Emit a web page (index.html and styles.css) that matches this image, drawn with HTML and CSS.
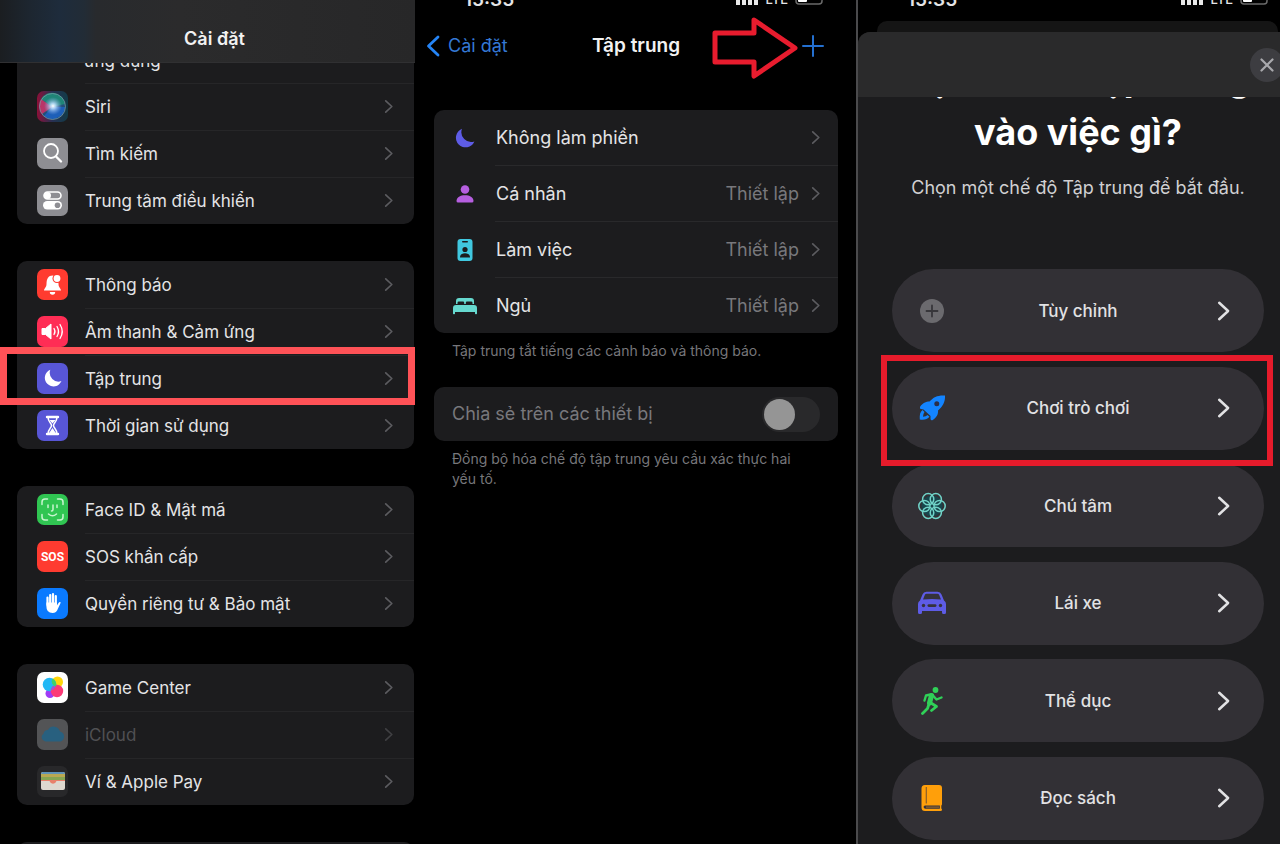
FILE: index.html
```html
<!DOCTYPE html>
<html lang="vi">
<head>
    <meta charset="UTF-8">
    <meta name="viewport" content="width=device-width, initial-scale=1.0">
    <title>Cài đặt - Tập trung</title>
    <link rel="stylesheet" href="styles.css">
</head>
<body>
    <svg class="sprite" aria-hidden="true">
        <symbol id="chevron" viewBox="0 0 10 16">
            <path d="M1.5 2 L8 8 L1.5 14" fill="none" stroke="currentColor" stroke-width="1.800" stroke-linecap="round" stroke-linejoin="round"/>
        </symbol>
        <symbol id="moon" viewBox="0 0 20 20">
            <path d="M7 .8 A9.6 9.6 0 1 0 19.4 13.4 A9.8 9.8 0 0 1 7 .8 Z" fill="currentColor"/>
        </symbol>
    </svg>

    <main class="screens">
        <!-- Settings list -->
        <section class="screen settings">
            <header class="settings-header">
                <h2>Cài đặt</h2>
            </header>

            <ul class="card card-cut">
                <li class="row row-cut"><span>ứng dụng</span></li>
                <li>
                    <a class="row" href="#siri">
                        <svg class="app-icon" viewBox="0 0 31 31">
                            <defs>
                                <radialGradient id="siriCore">
                                    <stop offset="0" stop-color="#fff"/>
                                    <stop offset=".3" stop-color="#bfe0ff" stop-opacity=".85"/>
                                    <stop offset="1" stop-color="#7aa0e0" stop-opacity="0"/>
                                </radialGradient>
                                <linearGradient id="siriBg">
                                    <stop offset="0" stop-color="#8c1038"/>
                                    <stop offset=".5" stop-color="#263052"/>
                                    <stop offset="1" stop-color="#123c48"/>
                                </linearGradient>
                            </defs>
                            <rect width="31" height="31" rx="7" fill="url(#siriBg)"/>
                            <circle cx="15.500" cy="15.500" r="13" fill="#235078"/>
                            <path d="M15 16 L4 8 A13 13 0 0 1 28 13 Z" fill="#1f8577"/>
                            <path d="M15 16 L4 8 A13 13 0 0 0 5 23 Z" fill="#b83668"/>
                            <path d="M15 16 L28 16 A13 13 0 0 1 7 25 Z" fill="#1d5fb8"/>
                            <circle cx="16" cy="15" r="9" fill="url(#siriCore)"/>
                            <circle cx="15.500" cy="15.500" r="13" fill="none" stroke="#7c9ea8" stroke-opacity=".7"/>
                        </svg>
                        <span class="label">Siri</span>
                        <svg class="chevron"><use href="#chevron"/></svg>
                    </a>
                </li>
                <li>
                    <a class="row" href="#search">
                        <svg class="app-icon" viewBox="0 0 31 31">
                            <rect width="31" height="31" rx="7" fill="#8e8e93"/>
                            <circle cx="14" cy="13" r="7" fill="none" stroke="#fff" stroke-width="1.800"/>
                            <path d="M19 18.500 L24 23.500" stroke="#fff" stroke-width="2.400" stroke-linecap="round"/>
                        </svg>
                        <span class="label">Tìm kiếm</span>
                        <svg class="chevron"><use href="#chevron"/></svg>
                    </a>
                </li>
                <li>
                    <a class="row" href="#control-center">
                        <svg class="app-icon" viewBox="0 0 31 31">
                            <rect width="31" height="31" rx="7" fill="#8e8e93"/>
                            <rect x="7" y="7" width="17" height="7" rx="3.500" fill="none" stroke="#fff" stroke-width="1.600"/>
                            <circle cx="10.500" cy="10.500" r="3.500" fill="#fff"/>
                            <rect x="6" y="16" width="19" height="8.500" rx="4.200" fill="#fff"/>
                            <circle cx="20.500" cy="20.200" r="2.800" fill="#8e8e93"/>
                        </svg>
                        <span class="label">Trung tâm điều khiển</span>
                        <svg class="chevron"><use href="#chevron"/></svg>
                    </a>
                </li>
            </ul>

            <ul class="card">
                <li>
                    <a class="row" href="#notifications">
                        <svg class="app-icon" viewBox="0 0 31 31">
                            <rect width="31" height="31" rx="7" fill="#ff3b30"/>
                            <path d="M7 21.500 C7 19.500 9.500 18.500 9.500 15 C9.500 9.500 11.500 6.500 15.500 6.500 C19.500 6.500 21.500 9.500 21.500 15 C21.500 18.500 24 19.500 24 21.500 Z" fill="#fff"/>
                            <path d="M12.800 23 H18.200 A2.700 2.700 0 0 1 12.800 23 Z" fill="#fff"/>
                            <circle cx="20" cy="9.500" r="4.500" fill="#ff3b30"/>
                            <circle cx="20" cy="9.500" r="3.400" fill="#fff"/>
                        </svg>
                        <span class="label">Thông báo</span>
                        <svg class="chevron"><use href="#chevron"/></svg>
                    </a>
                </li>
                <li>
                    <a class="row" href="#sounds">
                        <svg class="app-icon" viewBox="0 0 31 31">
                            <rect width="31" height="31" rx="7" fill="#ff2d55"/>
                            <path d="M5 12.500 H8.500 L14 8 V23 L8.500 18.500 H5 Z" fill="#fff" stroke="#fff" stroke-linejoin="round"/>
                            <path d="M17 12.500 Q19 15.500 17 18.500 M20 10.500 Q23 15.500 20 20.500 M23 8.500 Q27.500 15.500 23 22.500" fill="none" stroke="#fff" stroke-width="1.300" stroke-linecap="round"/>
                        </svg>
                        <span class="label">Âm thanh &amp; Cảm ứng</span>
                        <svg class="chevron"><use href="#chevron"/></svg>
                    </a>
                </li>
                <li class="marked">
                    <a class="row" href="#focus">
                        <svg class="app-icon" viewBox="0 0 31 31">
                            <rect width="31" height="31" rx="7" fill="#5856d6"/>
                            <use href="#moon" x="7" y="6" width="18" height="18" color="#fff"/>
                        </svg>
                        <span class="label">Tập trung</span>
                        <svg class="chevron"><use href="#chevron"/></svg>
                    </a>
                </li>
                <li>
                    <a class="row" href="#screen-time">
                        <svg class="app-icon" viewBox="0 0 31 31">
                            <rect width="31" height="31" rx="7" fill="#5856d6"/>
                            <path d="M10 7 H21 M10 24 H21" stroke="#fff" stroke-width="2.400" stroke-linecap="round"/>
                            <path d="M11 7 C11 12 14.500 13 14.500 15.500 C14.500 18 11 19 11 24 H20 C20 19 16.500 18 16.500 15.500 C16.500 13 20 12 20 7" fill="none" stroke="#fff" stroke-width="1.500"/>
                            <path d="M12.500 10 H18.500 L15.500 13.500 Z M15.500 18 L18.800 23 H12.200 Z" fill="#fff"/>
                        </svg>
                        <span class="label">Thời gian sử dụng</span>
                        <svg class="chevron"><use href="#chevron"/></svg>
                    </a>
                </li>
            </ul>

            <ul class="card">
                <li>
                    <a class="row" href="#face-id">
                        <svg class="app-icon" viewBox="0 0 31 31">
                            <rect width="31" height="31" rx="7" fill="#30c552"/>
                            <g fill="none" stroke="#c8f5d0" stroke-width="1.500" stroke-linecap="round">
                                <path d="M5 10.500 V8 A3 3 0 0 1 8 5 H10.500 M20.500 5 H23 A3 3 0 0 1 26 8 V10.500 M26 20.500 V23 A3 3 0 0 1 23 26 H20.500 M10.500 26 H8 A3 3 0 0 1 5 23 V20.500"/>
                                <path d="M11 11 V13.500 M20 11 V13.500 M16 11 V15.500 Q16 17 14.500 17 M11.500 20 Q15.500 23.500 19.500 20"/>
                            </g>
                        </svg>
                        <span class="label">Face ID &amp; Mật mã</span>
                        <svg class="chevron"><use href="#chevron"/></svg>
                    </a>
                </li>
                <li>
                    <a class="row" href="#sos">
                        <span class="app-icon sos-icon">SOS</span>
                        <span class="label">SOS khẩn cấp</span>
                        <svg class="chevron"><use href="#chevron"/></svg>
                    </a>
                </li>
                <li>
                    <a class="row" href="#privacy">
                        <svg class="app-icon" viewBox="0 0 31 31">
                            <rect width="31" height="31" rx="7" fill="#0a7aff"/>
                            <path d="M10.500 9.500 V17 M13.200 7 V16 M16 6.200 V16 M18.800 8 V17" stroke="#fff" stroke-width="2.200" stroke-linecap="round"/>
                            <path d="M9.400 14.500 H19.900 V17.500 L21.500 15 Q22.800 13.300 23.800 14.600 L21 20.500 Q19.500 25 15.500 25 Q9.400 25 9.400 18.500 Z" fill="#fff"/>
                        </svg>
                        <span class="label">Quyền riêng tư &amp; Bảo mật</span>
                        <svg class="chevron"><use href="#chevron"/></svg>
                    </a>
                </li>
            </ul>

            <ul class="card">
                <li>
                    <a class="row" href="#game-center">
                        <svg class="app-icon" viewBox="0 0 31 31">
                            <rect width="31" height="31" rx="7" fill="#fff"/>
                            <circle cx="20.500" cy="10" r="5.500" fill="#ffd60a"/>
                            <circle cx="13" cy="21.500" r="4.500" fill="#a03cf5"/>
                            <circle cx="12.500" cy="12.500" r="6.800" fill="#22b8f5"/>
                            <circle cx="20" cy="19" r="6.200" fill="#fb3a76"/>
                            <path d="M15.500 6.500 A5.500 5.500 0 0 0 19 14.800 A6.800 6.800 0 0 0 15.500 6.500 Z" fill="#3fd26a"/>
                            <path d="M14 18.500 A6 6 0 0 1 18.500 13.600 A6.500 6.500 0 0 1 14 18.500 Z" fill="#8a5be8"/>
                        </svg>
                        <span class="label">Game Center</span>
                        <svg class="chevron"><use href="#chevron"/></svg>
                    </a>
                </li>
                <li>
                    <a class="row disabled" href="#icloud">
                        <svg class="app-icon" viewBox="0 0 31 31">
                            <rect width="31" height="31" rx="7" fill="#535456"/>
                            <path d="M8.500 22.500 A4.300 4.300 0 0 1 6.500 14.700 A4.500 4.500 0 0 1 11 11 A6.500 6.500 0 0 1 23 12.500 A5.200 5.200 0 0 1 23.500 22.500 Z" fill="#28607f"/>
                        </svg>
                        <span class="label">iCloud</span>
                        <svg class="chevron"><use href="#chevron"/></svg>
                    </a>
                </li>
                <li>
                    <a class="row" href="#wallet">
                        <svg class="app-icon" viewBox="0 0 31 31">
                            <rect width="31" height="31" rx="7" fill="#28282a"/>
                            <rect x="4" y="6" width="24" height="18" rx="2" fill="#ddd8cf"/>
                            <path d="M4 8 A2 2 0 0 1 6 6 H26 A2 2 0 0 1 28 8 Z" fill="#5f93b8"/>
                            <path d="M4 8 H28 V11 H4 Z" fill="#b9a852"/>
                            <path d="M4 11 H28 V14 H4 Z" fill="#86a552"/>
                            <path d="M4 14 H28 V15 H19.500 Q18.500 17.800 16 17.800 Q13.500 17.800 12.500 15 H4 Z" fill="#e8806a"/>
                        </svg>
                        <span class="label">Ví &amp; Apple Pay</span>
                        <svg class="chevron"><use href="#chevron"/></svg>
                    </a>
                </li>
            </ul>

            <ul class="card">
                <li class="row"></li>
            </ul>
        </section>

        <!-- Focus list -->
        <section class="screen focus">
            <div class="status-bar">
                <span>15:35</span>
                <div class="status-right">
                    <svg class="signal" viewBox="0 0 23 12"><path d="M2 6 V12 M8 4 V12 M14 2 V12 M20 0 V12" stroke="#e8e8e8" stroke-width="4"/></svg>
                    <span class="carrier">LTE</span>
                    <svg class="battery" viewBox="0 0 28 13"><rect x="1" y="1" width="26" height="11" rx="3" fill="none" stroke="#6a6a6a" stroke-width="1.500"/><rect x="3" y="3" width="9" height="7" rx="1" fill="#fff"/></svg>
                </div>
            </div>

            <nav class="focus-nav">
                <a class="back" href="#settings">
                    <svg viewBox="0 0 14 22"><path d="M12 2 L2.500 11 L12 20" fill="none" stroke="currentColor" stroke-width="2.800" stroke-linecap="round" stroke-linejoin="round"/></svg>
                    Cài đặt
                </a>
                <h2>Tập trung</h2>
                <button class="add" type="button" aria-label="Thêm">
                    <svg viewBox="0 0 22 22"><path d="M11 1 V21 M1 11 H21" stroke="currentColor" stroke-width="2" stroke-linecap="round"/></svg>
                </button>
                <svg class="arrow" viewBox="0 0 88 64"><path d="M4 17 H43 V4 L84 32 L43 60 V46 H4 Z" fill="none" stroke="#e81c2e" stroke-width="5" stroke-linejoin="round"/></svg>
            </nav>

            <ul class="card">
                <li>
                    <a class="row" href="#dnd">
                        <svg class="mode-icon indigo" viewBox="0 0 26 26"><use href="#moon" x="3" y="3" width="20" height="20"/></svg>
                        <span class="label">Không làm phiền</span>
                        <svg class="chevron"><use href="#chevron"/></svg>
                    </a>
                </li>
                <li>
                    <a class="row" href="#personal">
                        <svg class="mode-icon purple" viewBox="0 0 26 26" fill="currentColor">
                            <circle cx="13" cy="8.500" r="4.300"/>
                            <path d="M4.500 20 C4.500 16 8.500 14.200 13 14.200 C17.500 14.200 21.500 16 21.500 20 Q21.500 21.500 20 21.500 H6 Q4.500 21.500 4.500 20 Z"/>
                        </svg>
                        <span class="label">Cá nhân</span>
                        <span class="value">Thiết lập</span>
                        <svg class="chevron"><use href="#chevron"/></svg>
                    </a>
                </li>
                <li>
                    <a class="row" href="#work">
                        <svg class="mode-icon cyan" viewBox="0 0 26 26">
                            <rect x="5.500" y="2" width="15" height="22" rx="3" fill="currentColor"/>
                            <rect x="10" y="4" width="6" height="1.600" rx=".8" fill="#1c1c1e"/>
                            <circle cx="13" cy="12.500" r="2.600" fill="#1c1c1e"/>
                            <path d="M8 20.500 C8 17.500 10 16.200 13 16.200 C16 16.200 18 17.500 18 20.500 Z" fill="#1c1c1e"/>
                        </svg>
                        <span class="label">Làm việc</span>
                        <span class="value">Thiết lập</span>
                        <svg class="chevron"><use href="#chevron"/></svg>
                    </a>
                </li>
                <li>
                    <a class="row" href="#sleep">
                        <svg class="mode-icon mint" viewBox="0 0 26 26" fill="currentColor">
                            <path d="M4 11 V8 A3 3 0 0 1 7 5 H19 A3 3 0 0 1 22 8 V11 H20.500 V9.800 Q20.500 8.500 19.200 8.500 H15 Q13.800 8.500 13.800 9.800 V11 H12.200 V9.800 Q12.200 8.500 11 8.500 H6.800 Q5.500 8.500 5.500 9.800 V11 Z"/>
                            <path d="M1 20.500 V15 Q1 12 4 12 H22 Q25 12 25 15 V20.500 Q25 21.300 24.200 21.300 H23.800 Q23 21.300 23 20.500 V19 H3 V20.500 Q3 21.300 2.200 21.300 H1.800 Q1 21.300 1 20.500 Z"/>
                        </svg>
                        <span class="label">Ngủ</span>
                        <span class="value">Thiết lập</span>
                        <svg class="chevron"><use href="#chevron"/></svg>
                    </a>
                </li>
            </ul>
            <p class="note">Tập trung tắt tiếng các cảnh báo và thông báo.</p>

            <div class="card share">
                <label for="share">Chia sẻ trên các thiết bị</label>
                <input class="switch" type="checkbox" id="share" disabled>
            </div>
            <p class="note">Đồng bộ hóa chế độ tập trung yêu cầu xác thực hai yếu tố.</p>
        </section>

        <!-- New focus sheet -->
        <section class="screen picker">
            <div class="status-bar">
                <span>15:35</span>
                <div class="status-right">
                    <svg class="signal" viewBox="0 0 23 12"><path d="M2 6 V12 M8 4 V12 M14 2 V12 M20 0 V12" stroke="#e8e8e8" stroke-width="4"/></svg>
                    <span class="carrier">LTE</span>
                    <svg class="battery" viewBox="0 0 28 13"><rect x="1" y="1" width="26" height="11" rx="3" fill="none" stroke="#6a6a6a" stroke-width="1.500"/><rect x="3" y="3" width="9" height="7" rx="1" fill="#fff"/></svg>
                </div>
            </div>
            <div class="sheet-behind"></div>
            <div class="sheet">
                <header class="sheet-header">
                    <button class="close" type="button" aria-label="Đóng">
                        <svg viewBox="0 0 14 14"><path d="M1.500 1.500 L12.500 12.500 M12.500 1.500 L1.500 12.500" stroke="currentColor" stroke-width="2.200" stroke-linecap="round"/></svg>
                    </button>
                </header>
                <div class="sheet-title">
                    <h1>Bạn muốn tập trung<br>vào việc gì?</h1>
                </div>
                <p class="sheet-text">Chọn một chế độ Tập trung để bắt đầu.</p>

                <div class="options">
                    <button class="option" type="button">
                        <svg class="option-icon" viewBox="0 0 28 28">
                            <circle cx="14" cy="14" r="12" fill="#6b6a6e"/>
                            <path d="M14 8.500 V19.500 M8.500 14 H19.500" stroke="#37363a" stroke-width="1.800" stroke-linecap="round"/>
                        </svg>
                        <span>Tùy chỉnh</span>
                        <svg class="option-chevron"><use href="#chevron"/></svg>
                    </button>
                    <button class="option selected" type="button">
                        <svg class="option-icon" viewBox="0 0 28 28">
                            <path d="M27 1.500 C20 1 15.500 3 11.500 7.500 C8 7.500 4.500 9 2 13 Q1.500 14.800 3 15 L5.500 15.500 L12.500 22 L12.500 25 Q13 27 14.800 26 C18.500 23.500 20.500 20 20 16.500 C24.500 12.500 27.500 8 27 1.500 Z" fill="#1384ff"/>
                            <circle cx="18.800" cy="9.700" r="2.500" fill="#2b2f4a"/>
                            <path d="M4.500 16 C2 18 1.500 21 1.800 25.500 C6 26 9.500 25.500 11.500 22.800 L9.500 21 Q8 22.800 5 22.800 Q5 20 6.500 18 Z" fill="#1384ff"/>
                        </svg>
                        <span>Chơi trò chơi</span>
                        <svg class="option-chevron"><use href="#chevron"/></svg>
                    </button>
                    <button class="option" type="button">
                        <svg class="option-icon" viewBox="0 0 28 28">
                            <circle cx="14" cy="14" r="10.500" fill="#17454c"/>
                            <g fill="none" stroke="#70d3c8" stroke-width="1.500">
                                <circle cx="6.400" cy="14" r="5.600"/>
                                <circle cx="21.600" cy="14" r="5.600"/>
                                <circle cx="10.200" cy="7.200" r="5.600"/>
                                <circle cx="17.800" cy="7.200" r="5.600"/>
                                <circle cx="10.200" cy="20.800" r="5.600"/>
                                <circle cx="17.800" cy="20.800" r="5.600"/>
                            </g>
                        </svg>
                        <span>Chú tâm</span>
                        <svg class="option-chevron"><use href="#chevron"/></svg>
                    </button>
                    <button class="option" type="button">
                        <svg class="option-icon" viewBox="0 0 28 28">
                            <path d="M0 23.500 V15 Q0 12.500 2 11.500 L4.500 5.500 Q5.500 2.800 8.500 2.800 H19.500 Q22.500 2.800 23.500 5.500 L26 11.500 Q28 12.500 28 15 V23.500 Q28 25 26.500 25 H25.500 Q24 25 24 23.500 V22 H4 V23.500 Q4 25 2.500 25 H1.500 Q0 25 0 23.500 Z" fill="#5e5ce6"/>
                            <path d="M5 10.500 L6.800 6 Q7.300 4.800 8.600 4.800 H19.400 Q20.700 4.800 21.200 6 L23 10.500 Q14 9.700 5 10.500 Z" fill="#35323c"/>
                            <circle cx="5.500" cy="16.500" r="1.700" fill="#35323c"/>
                            <circle cx="22.500" cy="16.500" r="1.700" fill="#35323c"/>
                            <rect x="9.500" y="15.300" width="9" height="2.600" rx="1.300" fill="#35323c"/>
                        </svg>
                        <span>Lái xe</span>
                        <svg class="option-chevron"><use href="#chevron"/></svg>
                    </button>
                    <button class="option" type="button">
                        <svg class="option-icon" viewBox="0 0 28 28">
                            <circle cx="17.500" cy="3" r="2.900" fill="#30d158"/>
                            <g fill="none" stroke="#30d158" stroke-linecap="round" stroke-linejoin="round">
                                <path d="M13.500 8.500 L11.500 16" stroke-width="5"/>
                                <path d="M14.500 8 L18.500 12.500 L23.500 10.500" stroke-width="2.400"/>
                                <path d="M12.500 7.500 L8 8.500 L6.500 13.500" stroke-width="2.400"/>
                                <path d="M13 16 L18.500 19.500 L13.500 23.500" stroke-width="2.800"/>
                                <path d="M11 17 L9.500 21.500 L4.500 26.500" stroke-width="2.800"/>
                            </g>
                        </svg>
                        <span>Thể dục</span>
                        <svg class="option-chevron"><use href="#chevron"/></svg>
                    </button>
                    <button class="option" type="button">
                        <svg class="option-icon" viewBox="0 0 28 28">
                            <path d="M7 1 H21 Q24 1 24 4 V20 Q24 21 23.300 21.500 V24.500 Q24 24.800 24 25.700 Q24 27 22.500 27 H7 Q3.500 27 3.500 23.500 V4.500 Q3.500 1 7 1 Z" fill="#ff9f0a"/>
                            <path d="M8.300 3 V19.500" stroke="#8a5f2a" stroke-width="1.200"/>
                            <path d="M7 21.500 H21.800 V24.700 H7 Q5.600 24.500 5.600 23.100 Q5.600 21.700 7 21.500 Z" fill="#35323c"/>
                            <path d="M8 23.100 H21" stroke="#c98424" stroke-width=".8"/>
                        </svg>
                        <span>Đọc sách</span>
                        <svg class="option-chevron"><use href="#chevron"/></svg>
                    </button>
                </div>
            </div>
        </section>
    </main>
</body>
</html>
```

FILE: styles.css
```css
* {
    margin: 0;
    padding: 0;
    box-sizing: border-box;
}

body {
    background: #000;
    color: #e4e4e6;
    font-family: Inter, Roboto, sans-serif;
    font-size: 17px;
    line-height: 24px;
}

a {
    color: inherit;
    text-decoration: none;
}

ul {
    list-style: none;
}

button {
    border: none;
    background: none;
    color: inherit;
    font: inherit;
    cursor: pointer;
}

svg {
    display: block;
    flex-shrink: 0;
}

h2 {
    font-size: 18px;
    font-weight: 600;
    color: #f2f2f2;
}

.sprite {
    position: absolute;
    width: 0;
    height: 0;
}

.screens {
    display: grid;
    grid-template-columns: 415fr 441fr 424fr;
    height: 100vh;
    overflow: hidden;
}

.screen {
    min-width: 0;
    overflow: hidden;
}

/* Shared rows */
.card {
    background: #1c1c1e;
    border-radius: 10px;
}

.row {
    display: flex;
    align-items: center;
}

.label {
    flex: 1;
    white-space: nowrap;
}

.chevron {
    width: 10px;
    height: 15px;
    color: #5c5c60;
}

/* Settings */
.settings {
    display: flex;
    flex-direction: column;
    gap: 37px;
}

.settings .card {
    margin: 0 1px 0 17px;
}

.settings .card-cut {
    margin-top: -37px;
    border-radius: 0 0 10px 10px;
}

.settings-header {
    flex-shrink: 0;
    display: flex;
    justify-content: center;
    align-items: flex-end;
    height: 63px;
    padding: 0 0 11px 14px;
    background: linear-gradient(90deg, #1b1e21 0, #1d2630 30px, #1e2c3c 60px, #222c36 84px, #282a2d 96px, #2b2b2c 180px, #272728 100%);
    border-bottom: 1px solid #303032;
}

.settings .row {
    height: 47px;
    padding: 0 20px;
    gap: 17px;
}

.settings .row-cut {
    height: 20px;
    padding: 0 67px 10px;
    align-items: flex-end;
    overflow: hidden;
}

.settings li + li .label {
    position: relative;
}

.settings li + li .label::before {
    content: "";
    position: absolute;
    top: -12px;
    left: 0;
    right: -47px;
    height: 1px;
    background: #262628;
}

.app-icon {
    width: 31px;
    height: 31px;
}

.sos-icon {
    display: flex;
    align-items: center;
    justify-content: center;
    border-radius: 7px;
    background: #ff3b30;
    color: #fff;
    font-family: Roboto, sans-serif;
    font-size: 12px;
    font-weight: 700;
}

.disabled .label {
    color: #505053;
}

.disabled .chevron {
    color: #404043;
}

.marked {
    position: relative;
    z-index: 1;
}

.marked::after {
    content: "";
    position: absolute;
    inset: -8px -1px -3px -17px;
    border: 7px solid #ff5257;
}

/* Status bar */
.status-bar {
    display: flex;
    justify-content: space-between;
    align-items: flex-end;
    height: 12px;
    padding: 0 33px 0 49px;
    overflow: hidden;
    font-size: 19px;
    font-weight: 600;
}

.status-right {
    display: flex;
    align-items: flex-end;
    gap: 7px;
    padding-bottom: 7px;
}

.signal {
    width: 23px;
    height: 12px;
}

.carrier {
    height: 18px;
    font-size: 13px;
    font-weight: 500;
}

.battery {
    width: 28px;
    height: 13px;
}

/* Focus */
.focus {
    font-size: 18px;
}

.focus-nav {
    position: relative;
    display: grid;
    grid-template-columns: 1fr auto 1fr;
    align-items: center;
    height: 68px;
    margin-bottom: 30px;
    padding: 0 10px 0 11px;
}

.focus-nav h2 {
    font-size: 19px;
}

.back {
    display: flex;
    align-items: center;
    gap: 8px;
    color: #3478d4;
}

.back svg {
    width: 14px;
    height: 22px;
    color: #2584f5;
}

.add {
    justify-self: end;
    margin-right: 22px;
    color: #2470d0;
}

.add svg {
    width: 22px;
    height: 22px;
}

.arrow {
    position: absolute;
    top: 4px;
    right: 57px;
    width: 88px;
    height: 64px;
}

.focus .card {
    margin: 0 18px 0 19px;
}

.focus .row {
    height: 55px;
    padding: 0 17px 0 18px;
}

.focus li + li {
    border-top: 1px solid transparent;
    border-image: linear-gradient(90deg, transparent 62px, #29292b 62px) 1;
}

.mode-icon {
    width: 26px;
    height: 26px;
    margin-right: 18px;
}

.indigo {
    color: #5e5ce6;
}

.purple {
    color: #b65fe0;
}

.cyan {
    color: #40c8e0;
}

.mint {
    color: #66d9cf;
}

.value {
    margin-right: 12px;
    color: #78787c;
}

.note {
    margin: 0 44px 0 37px;
    padding-top: 8px;
    color: #77777b;
    font-size: 14px;
    line-height: 20px;
}

.focus .share {
    display: flex;
    align-items: center;
    justify-content: space-between;
    height: 54px;
    margin-top: 26px;
    padding: 0 18px;
    color: #78787c;
}

.switch {
    appearance: none;
    width: 58px;
    height: 35px;
    padding: 2px;
    border-radius: 18px;
    background: #29292b;
}

.switch::before {
    content: "";
    display: block;
    width: 31px;
    height: 31px;
    border-radius: 50%;
    background: #959595;
}

.switch:checked::before {
    margin-left: auto;
}

/* Picker */
.picker {
    display: flex;
    flex-direction: column;
    border-left: 2px solid #4a4a4c;
}

.picker .status-bar {
    flex-shrink: 0;
    padding-right: 12px;
}

.sheet-behind {
    flex-shrink: 0;
    height: 11px;
    margin: 9px 2px 0 19px;
    border-radius: 10px 10px 0 0;
    background: #151515;
}

.sheet {
    flex: 1;
    display: flex;
    flex-direction: column;
    border-radius: 12px 0 0 0;
    background: #1c1c1e;
    overflow: hidden;
}

.sheet-header {
    display: flex;
    align-items: center;
    justify-content: flex-end;
    height: 65px;
    background: #2a2a2b;
}

.close {
    display: flex;
    align-items: center;
    justify-content: center;
    width: 34px;
    height: 34px;
    margin-right: -4px;
    border-radius: 50%;
    background: #3d3d41;
    color: #a9a9ad;
}

.close svg {
    width: 14px;
    height: 14px;
}

.sheet-title {
    display: flex;
    align-items: flex-end;
    justify-content: center;
    height: 62px;
    padding-left: 18px;
    overflow: hidden;
    text-align: center;
}

.sheet-title h1 {
    color: #fff;
    font-size: 36px;
    font-weight: 700;
    line-height: 54px;
    white-space: nowrap;
}

.sheet-text {
    padding: 17px 0 0 18px;
    color: #d0d0d2;
    font-size: 18px;
    text-align: center;
    white-space: nowrap;
}

.options {
    flex: 1;
    display: flex;
    flex-direction: column;
    justify-content: space-between;
    padding: 69px 16px 4px 34px;
}

.option {
    position: relative;
    display: flex;
    align-items: center;
    justify-content: space-between;
    height: 83px;
    padding: 0 26px;
    border-radius: 42px;
    background: #323035;
    color: #e2e2e4;
    font-weight: 500;
}

.option-icon {
    width: 28px;
    height: 28px;
}

.option-chevron {
    width: 28px;
    height: 22px;
}

.selected::after {
    content: "";
    position: absolute;
    z-index: 1;
    inset: -12px -9px -16px -11px;
    border: 6px solid #e61b2b;
}
```
